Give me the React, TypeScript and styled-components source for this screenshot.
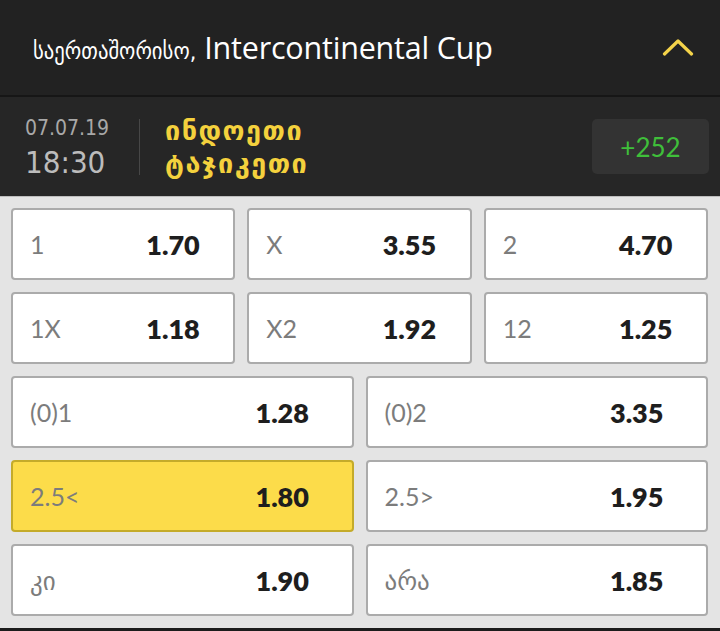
import React from "react";
import styled, { createGlobalStyle } from "styled-components";

const Global = createGlobalStyle`
  html, body { margin: 0; padding: 0; background: #e4e4e4; }
  body { width: 720px; height: 631px; overflow: hidden; }
`;

const COND = `"DejaVu Sans Condensed", "DejaVu Sans", sans-serif`;
const NUM = `Lato, "Open Sans", "DejaVu Sans", sans-serif`;

const Page = styled.div`
  width: 720px;
  height: 631px;
  display: flex;
  flex-direction: column;
  background: #e4e4e4;
`;

const Header = styled.header`
  height: 97px;
  flex: none;
  background: #222222;
  border-bottom: 2px solid #161616;
  display: flex;
  align-items: center;
  justify-content: space-between;
  padding: 0 26px 2px 33px;
  box-sizing: border-box;
`;

const Title = styled.h1`
  margin: 0;
  font-weight: 400;
  color: #ffffff;
  display: flex;
  align-items: baseline;
  gap: 8px;
`;

const TitleGeo = styled.span`
  font-family: ${COND};
  font-stretch: condensed;
  font-size: 23px;
`;

const TitleLatin = styled.span`
  font-family: "Open Sans", "DejaVu Sans", sans-serif;
  font-size: 30.5px;
  letter-spacing: -0.2px;
`;

const MatchRow = styled.div`
  height: 100px;
  flex: none;
  background: #262626;
  border-bottom: 1px solid #bdbdbd;
  box-sizing: border-box;
  display: flex;
  align-items: center;
  padding: 0 11px 0 25px;
`;

const DateCol = styled.div`
  display: flex;
  flex-direction: column;
  width: 114px;
  font-family: ${COND};
  font-stretch: condensed;
`;

const DateText = styled.span`
  font-size: 21px;
  line-height: 31px;
  color: #a8a8a8;
`;

const TimeText = styled.span`
  font-size: 31px;
  line-height: 36px;
  color: #bcbcbc;
`;

const Divider = styled.div`
  width: 1px;
  height: 56px;
  background: #474747;
  margin-right: 25px;
`;

const Teams = styled.div`
  flex: 1;
  display: flex;
  flex-direction: column;
  font-family: "DejaVu Sans", sans-serif;
  font-size: 27px;
  font-weight: 700;
  letter-spacing: 1.5px;
  line-height: 33px;
  color: #f4d13d;
`;

const MoreBox = styled.div`
  width: 117px;
  height: 55px;
  border-radius: 5px;
  background: #333333;
  display: flex;
  align-items: center;
  justify-content: center;
  font-family: ${NUM};
  font-size: 26px;
  color: #3fbf3a;
`;

const Odds = styled.div`
  flex: 1;
  display: flex;
  flex-direction: column;
  gap: 12px;
  padding: 11px 12px 12px 11px;
  box-sizing: border-box;
  background: #e4e4e4;
  border-bottom: 3px solid #1c1c1c;
`;

const OddsRow = styled.div<{ $cols: number }>`
  display: grid;
  grid-template-columns: repeat(${(p) => p.$cols}, 1fr);
  gap: 12px;
  height: 72px;
`;

const OddButton = styled.div<{ $active?: boolean; $wide?: boolean }>`
  display: flex;
  align-items: center;
  box-sizing: border-box;
  border-radius: 4px;
  border: 2px solid ${(p) => (p.$active ? "#c4ab2a" : "#ababab")};
  background: ${(p) => (p.$active ? "#fcdc4a" : "#ffffff")};
  padding-left: 17px;
  padding-right: ${(p) => (p.$wide ? "28px" : "19px")};
`;

const Label = styled.span`
  flex: 1;
  font-family: ${NUM};
  font-size: 25px;
  color: #7c7c7c;
`;

const Value = styled.span`
  width: 68px;
  font-family: ${NUM};
  font-weight: 800;
  font-size: 27px;
  color: #1e1e1e;
`;

const Chevron = () => (
  <svg width="32" height="18" viewBox="0 0 32 18" fill="none">
    <path
      d="M2.5 16 L16 3 L29.5 16"
      stroke="#f4d34a"
      strokeWidth="3.2"
      strokeLinecap="round"
      strokeLinejoin="round"
    />
  </svg>
);

type Odd = { label: string; value: string; active?: boolean };

const rows: Odd[][] = [
  [
    { label: "1", value: "1.70" },
    { label: "X", value: "3.55" },
    { label: "2", value: "4.70" },
  ],
  [
    { label: "1X", value: "1.18" },
    { label: "X2", value: "1.92" },
    { label: "12", value: "1.25" },
  ],
  [
    { label: "(0)1", value: "1.28" },
    { label: "(0)2", value: "3.35" },
  ],
  [
    { label: "2.5<", value: "1.80", active: true },
    { label: "2.5>", value: "1.95" },
  ],
  [
    { label: "კი", value: "1.90" },
    { label: "არა", value: "1.85" },
  ],
];

export default function App() {
  return (
    <Page>
      <Global />
      <Header>
        <Title>
          <TitleGeo>საერთაშორისო,</TitleGeo>
          <TitleLatin>Intercontinental Cup</TitleLatin>
        </Title>
        <Chevron />
      </Header>
      <MatchRow>
        <DateCol>
          <DateText>07.07.19</DateText>
          <TimeText>18:30</TimeText>
        </DateCol>
        <Divider />
        <Teams>
          <span>ინდოეთი</span>
          <span>ტაჯიკეთი</span>
        </Teams>
        <MoreBox>+252</MoreBox>
      </MatchRow>
      <Odds>
        {rows.map((row, i) => (
          <OddsRow key={i} $cols={row.length}>
            {row.map((o) => (
              <OddButton key={o.label} $active={o.active} $wide={row.length === 2}>
                <Label>{o.label}</Label>
                <Value>{o.value}</Value>
              </OddButton>
            ))}
          </OddsRow>
        ))}
      </Odds>
    </Page>
  );
}
